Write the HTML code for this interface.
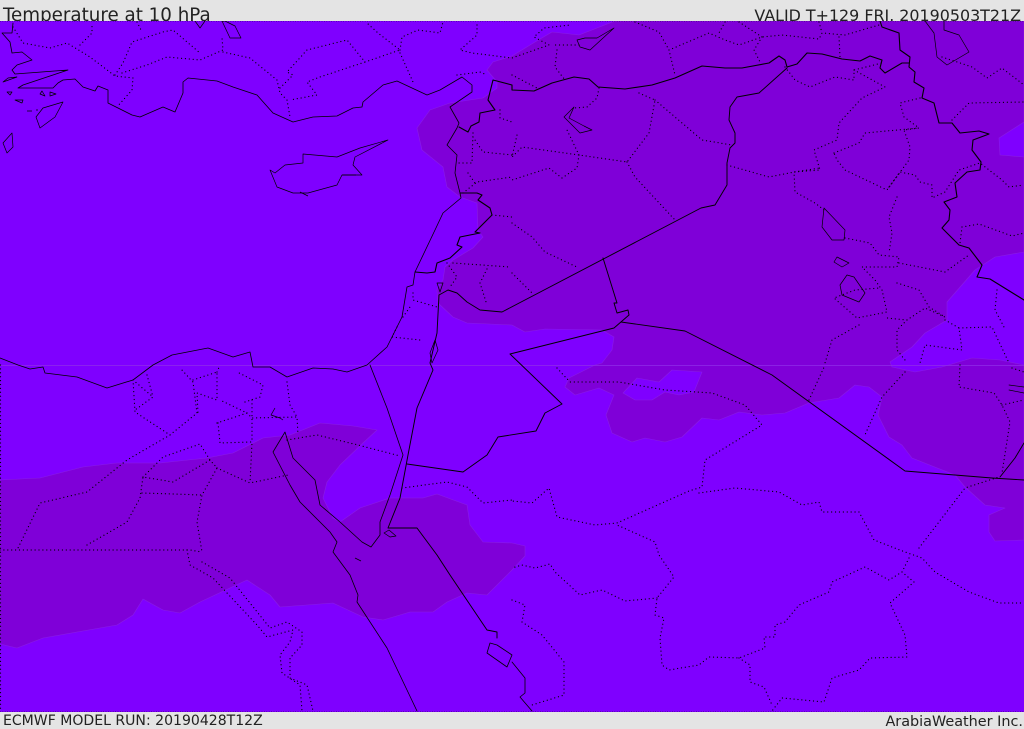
<!DOCTYPE html>
<html><head><meta charset="utf-8"><style>
html,body{margin:0;padding:0;background:#e4e4e4;width:1024px;height:729px;overflow:hidden}
.b{position:absolute;left:0;width:1024px;background:#e4e4e4;overflow:hidden;font-family:"DejaVu Sans",sans-serif;color:#222;white-space:nowrap}
.b span{position:absolute}
svg{position:absolute;left:0;top:21px}
.s{filter:blur(.3px)}
</style></head><body>
<div class="b" style="top:0;height:21px;font-size:18.27px">
<span style="left:3px;top:5px">Temperature at 10 hPa</span>
<span style="right:3px;top:6px;font-size:15.9px">VALID T+129 FRI. 20190503T21Z</span></div>
<svg width="1024" height="691" viewBox="0 21 1024 691">
<rect x="0" y="21" width="1024" height="691" fill="#7f00ff"/>
<g fill="#7f00d8" stroke="#8a1ce6" stroke-width=".6" stroke-linejoin="round">
<path d="M615 21L579 35 552 32 535 42 512 56 493 62 487 70 497 82 497 88 483 98 450 103 430 110 417 128 422 150 443 167 447 187 460 197 477 203 478 230 483 237 473 248 453 260 445 267 443 280 437 290 438 303 453 317 467 323 512 325 525 332 545 329 602 330 614 337 612 350 602 363 595 365 569 378 565 387 575 395 599 388 614 395 606 415 612 433 632 442 645 438 665 442 682 437 702 418 719 420 739 412 762 415 785 413 809 403 839 398 855 385 869 387 882 397 878 415 889 437 902 445 912 458 955 475 965 487 985 505 1005 508 989 515 989 532 995 541 1024 540V21Z"/>
<path d="M0 480L40 478 83 467 117 463 160 463 207 458 233 453 263 438 290 435 320 423 353 426 377 430 363 443 340 465 327 482 323 498 333 518 340 522 360 508 390 498 423 498 437 494 467 505 470 525 483 542 512 543 525 546 525 556 512 570 487 595 467 593 447 602 433 612 410 612 383 620 363 617 333 603 280 607 270 595 247 580 200 602 180 613 163 610 143 599 133 615 117 625 43 638 17 648 0 644Z"/>
</g>
<g fill="#7f00ff" stroke="#8a1ce6" stroke-width=".6" stroke-linejoin="round">
<path d="M623 393L637 378 659 382 672 370 702 372 694 392 679 395 665 392 652 400 635 400Z"/>
<path d="M1024 122L999 138 1000 155 1024 157Z"/>
<path d="M1024 252L995 257 975 270 947 302 947 320 925 333 912 347 890 362 892 367 915 372 942 367 972 358 1000 360 1024 365Z"/>
</g>
<rect x="0" y="365" width="1024" height="1" fill="#8f2ce8" opacity=".75"/>
<g fill="none" stroke="#000" stroke-width="1.25" stroke-dasharray="0 3.9" stroke-linecap="round" stroke-linejoin="round">
<path d="M.5 365V711"/>
<path d="M13 27L23 43 50 48 67 43 90 57 115 76 133 78 132 90 117 107M80 45L92 33 92 25M115 75L123 63 132 42 163 32 173 30 200 53M137 22L142 32M122 73L147 65 167 57 200 60 223 50 222 38M223 52L250 58 277 80 280 93 287 100 290 117M280 88L293 75 287 72 307 50 347 40 365 62 320 77 307 82 317 95 290 100M365 62L400 50 378 33 367 23M400 50L402 37 418 30 440 33 443 22M400 53L413 82M477 25L477 35 460 50 472 53 512 58 549 45 534 37 544 28 570 25M457 75L480 72 487 75M557 50L555 67 565 80M579 45L555 45M669 50L675 75M669 50L709 33 725 40 739 45 762 37 782 35 819 39 822 33 845 35 879 25M635 22L659 32 669 50M739 22L762 37M725 22L719 33M819 22L822 33M839 37L840 57M762 37L754 50 760 62"/>
<path d="M785 67L795 80 810 87 835 77 854 80 854 70 882 63M854 70L885 87 862 98 839 123 837 140 814 150 820 170 794 172 795 192 815 203 824 210M834 153L859 143 865 133 919 128 904 130 910 147 909 160 887 190 845 170 837 160 834 153M920 98L900 103 904 117 919 128M889 187L900 172 915 175 920 182 932 185 932 198 945 192 959 170 980 163 1002 180 1009 187 1024 185M952 120L969 103 1024 102M942 57L972 67 987 78 1002 68 1015 78 1024 85M962 227L960 243M962 227L979 224 1012 236 1024 233"/>
<path d="M897 197L889 217 892 233 889 253M845 238L870 243 879 255 899 257 897 267 862 267 875 280 882 290 887 312 857 318 834 298 855 290 879 288M899 263L945 272 969 255M897 283L919 290 929 307 945 317 925 308 907 320 887 318M859 325L832 340 825 363M907 320L897 330 897 350 905 360M945 320L959 328 962 350 925 345 920 363M959 328L992 327 1009 363M997 290L995 310 1004 327"/>
<path d="M512 75L537 88M599 88L597 98 587 107 574 108M639 93L655 100 649 133 627 162 579 155 522 147 512 157 517 135M655 100L702 140 732 145M627 162L635 177 675 220M579 155L567 130M579 155L577 168 562 178 549 168 512 180M727 165L769 177 794 172 820 168M512 223L532 237 545 252 579 268M512 273L532 293"/>
<path d="M500 110L500 118 512 122M473 133L472 163 457 163M473 137L483 152 512 155M463 193L477 182 512 177M468 173L475 183M492 215L512 217M447 263L457 277 450 287M453 263L510 267M480 283L488 267M480 283L487 305M413 293L413 300 437 307M397 327L392 337 420 340M403 317L410 307"/>
<path d="M133 380L135 412 170 435 197 413 193 382 180 368M133 380L153 397 135 410M147 375L153 397M193 380L217 372 217 400 197 393 198 413M217 372L220 365M170 435L127 460 87 492 40 503 17 550M0 550H190L202 552M87 545L127 522 140 498 143 477 173 482 210 460 217 468 202 495 197 522 202 552M143 477L163 457 200 444 210 460M142 493L202 495M217 468L250 483 288 475M218 423L220 443 252 442 250 483M252 400L252 442M217 423L247 413 220 400M247 413L252 418 297 417 298 435M287 382L290 405 297 417M245 402L260 397 263 385 237 372M287 440L317 435 358 445 400 456M402 488L447 482 467 487 483 503 512 500"/>
<path d="M187 550L190 565 213 578 257 625 267 637 293 630 290 642 280 655 282 673 300 685 302 711M202 562L230 578 270 628 287 622 302 632 302 645 290 658 290 678 307 685 313 711"/>
<path d="M557 368L570 382 619 382 665 390 712 393 745 405 762 425 705 460 702 487 689 491 617 523 595 525 557 517 549 488 532 503 512 501M699 493L735 488 779 492 802 505 819 502 822 512 859 512 874 540 905 552 922 558 935 572 969 592 999 603 1024 603M919 548L965 488 999 477M909 558L902 572 914 582 890 603 905 635 907 657 870 658 859 670 832 678 824 702 782 698 772 711M902 572L889 580 865 567 832 582 829 592 799 605 785 622 775 625 775 637 764 637 765 648 739 658 709 657 699 665 669 670 662 665 660 638 664 618 655 615 657 598 674 577 659 555 655 542 617 525M739 658L750 665 750 682 764 687 772 705M657 598L625 601 602 590 580 595 555 572 550 564 535 568 522 565 512 568M512 600L525 605 522 622 542 635 564 662 564 695 532 705M809 400L825 365M905 372L882 397 864 437M960 365L959 387 994 393 1002 405 1010 422 1002 473M1002 405L1024 400M1012 368L1024 372"/>
</g>
<g stroke="#000" stroke-width=".8" stroke-dasharray=".8 1.6" opacity=".45"><path d="M0 21.5H1024M0 711.5H1024"/></g>
<g class="s" fill="none" stroke="#000" stroke-width=".95" stroke-linejoin="round" stroke-linecap="round">
<path d="M13 23L12 33 2 33 10 42 12 53 22 52 32 60 17 65 12 70 15 74 68 70 50 76 23 85 18 88 53 88 58 83 63 80 75 79 83 87 95 91 98 86 108 90 108 103 132 115 140 117 163 107 175 112 183 93 183 82 188 78 217 81 233 87 257 95 273 113 293 122 313 117 337 116 353 108 362 107 363 102 383 85 397 81 427 95 440 90 462 77 472 85 472 92 450 107 459 123 457 128 447 145 457 155 455 173 460 193 461 198 443 213 435 230 415 272 413 285 407 287 402 317 387 347 367 365 347 372 333 369 313 368 287 377 270 367 253 367 250 352 233 357 208 348 172 355 153 365 133 380 107 388 77 377 45 373 43 367 30 369 18 365 0 358" stroke-width=".8"/>
<path d="M460 193L477 193 482 195 478 200 490 208 492 215 475 232 480 233 460 237 457 245 462 247 450 258 437 263 435 272 427 273 415 272" stroke-width="1.1"/>
<path d="M459 127L468 132 471 126 479 122 480 113 495 110 488 100 493 80 512 85 512 90 534 91 552 83 574 77 589 79 598 87 625 89 652 85 675 78 702 66 725 68 742 68 769 63 779 56 785 60 787 67 797 64 807 53 822 54 842 59 860 61 870 56 882 60 880 68 885 73 902 63 909 63" stroke-width="1.1"/>
<path d="M880 21L882 27 899 33 900 50 910 57 909 67 915 72 914 82 924 88 922 98 934 103 939 123 952 123 960 133 979 131 989 134 973 140 972 150 981 162 980 170 967 172 955 183 957 197 944 202 950 210 949 220 942 228 959 245 969 248 982 265 977 277 990 279 1024 300" stroke-width="1.1"/>
<path d="M787 68L759 93 737 97 730 107 729 120 735 133 735 143 730 148 727 163 727 185 715 205 701 208 502 312 480 310 467 302 457 293 448 290 439 295 437 333 430 363 433 370 417 408 408 455 400 498 388 528 417 528 437 555 450 575 487 630 497 632 497 638"/>
<path d="M603 258L617 303 614 303 617 313 628 310 629 315 614 328 510 354 562 404 545 413 536 431 498 437 487 455 463 472 407 464"/>
<path d="M621 322L685 331 772 375 905 471 992 478 1024 480M1000 477L1015 458 1024 443"/>
<path d="M370 365L387 408 403 455 390 495 380 522 380 535 371 547 362 542 340 522 320 505 315 480 293 458 285 432 273 452 290 485 300 502 330 532 337 542 333 552 350 575 358 595 357 602 387 648 417 711" stroke-width=".8"/>
<path d="M512 662L525 678 525 693 520 697 532 711M490 643L487 653 507 667 512 655 497 645Z" stroke-width=".8"/>
<path d="M925 21L934 33 937 57 947 65 969 52 959 35 944 30 944 21M1009 385L1024 387M1009 390L1024 393" stroke-width=".7"/>
</g>
<g class="s" fill="none" stroke="#000" stroke-width=".7" stroke-linejoin="round">
<path d="M270 170L277 187 293 193 308 193 337 185 342 175 362 175 353 165 355 157 388 140 360 148 337 157 303 154 303 163 285 165 275 173Z"/>
<path d="M63 102L43 108 36 117 40 128 55 117ZM12 133L3 143 7 153 13 147ZM8 78L3 82 17 77ZM7 92L10 95 12 92ZM15 100L22 103 23 100ZM27 111H32M42 91L45 96 40 94ZM50 92L56 94 50 96ZM36 110H38"/>
<path d="M574 107L564 117 580 133 592 130 584 126 569 118ZM577 40L580 47 590 50 614 28 597 38 585 38Z"/>
<path d="M824 208L822 227 832 240 844 240 845 230ZM837 257L834 262 842 267 849 263ZM847 275L840 285 842 295 859 302 865 293 854 277Z"/>
<path d="M435 340L430 353 432 363 438 350ZM437 283L440 292 443 283Z"/>
<path d="M222 21L230 38 241 38 235 26 225 21ZM195 21L200 28 205 21M275 408L271 415 280 418 283 420M384 533L390 537 396 536 389 530ZM355 558L361 561M342 175H356M300 192L308 196"/>
</g>
</svg>
<div class="b" style="top:712px;height:17px;font-size:14.05px">
<span style="left:3px;top:1px">ECMWF MODEL RUN: 20190428T12Z</span>
<span style="right:1px;top:2px;font-size:14.4px">ArabiaWeather Inc.</span></div>
</body></html>
